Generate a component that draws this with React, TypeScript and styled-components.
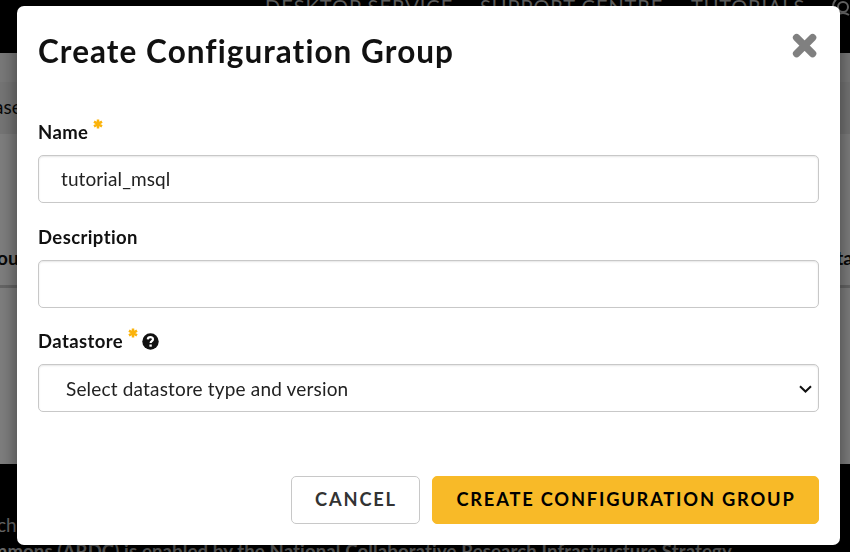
import React from "react";
import styled, { createGlobalStyle } from "styled-components";

const Global = createGlobalStyle`
  * { box-sizing: border-box; }
  body { margin: 0; overflow: hidden; font-family: Lato, "Open Sans", sans-serif; font-size: 19px; color: #111; }
  h1, p { margin: 0; }
`;

const Page = styled.div`
  height: 552px;
  overflow: hidden;
  display: flex;
  flex-direction: column;
  background: #fff;
`;

const Header = styled.header`
  flex: 0 0 53px;
  background: #000;
  color: #c8c8c8;
  font-size: 20px;
  line-height: 13px;
  display: flex;
  padding-left: 265px;
  white-space: nowrap;
`;

const NavItem = styled.span<{ $width: number; $spacing: number }>`
  flex: 0 0 ${(p) => p.$width}px;
  letter-spacing: ${(p) => p.$spacing}px;
`;

const UserIcon = styled.svg`
  flex: none;
  width: 22px;
  height: 20px;
`;

const Band = styled.div<{ $height: number; $color: string }>`
  flex: 0 0 ${(p) => p.$height}px;
  background: ${(p) => p.$color};
  display: flex;
  align-items: center;
  justify-content: space-between;
  white-space: nowrap;
`;

const Crumbs = styled(Band)`
  margin-left: -6px;
  padding-bottom: 3px;
`;

const TableHead = styled(Band)`
  margin: 0 -3px;
  padding-bottom: 3px;
  font-weight: 700;
  border-bottom: 3px solid #ccc;
`;

const Footer = styled.footer`
  flex: 1;
  background: #000;
  color: #ccc;
  padding-top: 48px;
  line-height: 26px;
  white-space: nowrap;
`;

const FooterText = styled.p<{ $bold?: boolean }>`
  font-weight: ${(p) => (p.$bold ? 700 : 400)};
  font-size: ${(p) => (p.$bold ? 18.5 : 19)}px;
  letter-spacing: ${(p) => (p.$bold ? 0.15 : 0)}px;
  margin-left: ${(p) => (p.$bold ? -19 : -3)}px;
`;

const Backdrop = styled.div`
  position: fixed;
  inset: 0;
  background: rgba(0, 0, 0, 0.5);
  padding: 6px 10px 7px 17px;
`;

const Dialog = styled.section`
  height: 539px;
  background: #fff;
  border-radius: 7px;
  box-shadow: 0 5px 20px rgba(0, 0, 0, 0.5);
  padding: 0 21px 21px;
  display: flex;
  flex-direction: column;
`;

const DialogHeader = styled.div`
  height: 106px;
  display: flex;
  justify-content: space-between;
  align-items: flex-start;
`;

const Title = styled.h1`
  padding-top: 25px;
  font-size: 31.5px;
  line-height: 40px;
  font-weight: 700;
  letter-spacing: 1.05px;
  white-space: nowrap;
`;

const Close = styled.button`
  margin: 27px 2px 0 0;
  padding: 0;
  border: 0;
  background: none;
  width: 25px;
  height: 25px;
  display: block;
  svg { display: block; }
`;

const Field = styled.div<{ $height: number }>`
  height: ${(p) => p.$height}px;
`;

const Label = styled.label`
  display: flex;
  height: 43px;
  padding-top: 7px;
  font-weight: 700;
  font-size: 18.5px;
  line-height: 26px;
  letter-spacing: 0.4px;
`;

const Star = styled.svg`
  width: 10px;
  height: 10px;
  margin: 0 0 0 5px;
`;

const Help = styled.svg`
  width: 17px;
  height: 17px;
  margin: 5px 0 0 4px;
`;

const controlStyle = `
  width: 100%;
  height: 48px;
  border: 1px solid #c8c8c8;
  border-radius: 5px;
  box-shadow: inset 0 1px 2px rgba(0, 0, 0, 0.1);
  background: #fff;
  color: #222;
  font-family: inherit;
  font-size: 19px;
  outline: none;
`;

const Input = styled.input`
  ${controlStyle}
  display: block;
  padding: 0 22px 1px;
  letter-spacing: 0.1px;
`;

const SelectWrap = styled.div`
  display: grid;
  align-items: center;
  > * { grid-area: 1 / 1; }
`;

const Select = styled.select`
  ${controlStyle}
  appearance: none;
  padding: 1px 27px 0;
  letter-spacing: 0.17px;
`;

const Chevron = styled.svg`
  justify-self: end;
  margin: 1px 7px 0 0;
  width: 13px;
  height: 8px;
  pointer-events: none;
`;

const Actions = styled.div`
  margin-top: auto;
  display: flex;
  justify-content: flex-end;
  gap: 12px;
`;

const Button = styled.button<{ $primary?: boolean }>`
  width: ${(p) => (p.$primary ? 387 : 129)}px;
  height: 48px;
  padding: 0 0 3px 1px;
  border: 1px solid ${(p) => (p.$primary ? "#f8ba28" : "#c8c8c8")};
  border-radius: 5px;
  background: ${(p) => (p.$primary ? "#f8ba28" : "#fff")};
  color: ${(p) => (p.$primary ? "#000" : "#333")};
  font: 700 18.3px Lato, sans-serif;
  letter-spacing: 1.8px;
  white-space: nowrap;
`;

const Required = () => (
  <Star viewBox="0 0 10 10" stroke="#fbb30b" strokeWidth="2.5">
    <path d="M5 .4v9.2M1 2.7l8 4.6M9 2.7 1 7.3" />
  </Star>
);

export default function App() {
  return (
    <>
      <Global />
      <Page>
        <Header>
          <NavItem $width={215} $spacing={1}>DESKTOP SERVICE</NavItem>
          <NavItem $width={211} $spacing={0.95}>SUPPORT CENTRE</NavItem>
          <NavItem $width={141} $spacing={0.85}>TUTORIALS</NavItem>
          <UserIcon viewBox="0 0 22 20" fill="none" stroke="#c8c8c8" strokeWidth="2">
            <circle cx="11" cy="7" r="5" />
            <path d="M1 6A11 11 0 0 1 11-4M5 15q6-4 12 0" />
          </UserIcon>
        </Header>
        <Band $height={29} $color="#f5f5f5" />
        <Crumbs $height={52} $color="#ececec"><span>ase</span></Crumbs>
        <Band $height={98} $color="#fff" />
        <TableHead $height={56} $color="#fff"><span>ou</span><span>ta</span></TableHead>
        <Band $height={176} $color="#fff" />
        <Footer>
          <FooterText>ch</FooterText>
          <FooterText $bold>ommons (ARDC) is enabled by the National Collaborative Research Infrastructure Strategy</FooterText>
        </Footer>
      </Page>
      <Backdrop>
        <Dialog role="dialog" aria-modal="true">
          <DialogHeader>
            <Title>Create Configuration Group</Title>
            <Close aria-label="Close">
              <svg width="25" height="25" viewBox="0 0 25 25" stroke="#808080" strokeWidth="7.4" strokeLinecap="round">
                <path d="M4.6 4.6l16 16M20.6 4.6l-16 16" />
              </svg>
            </Close>
          </DialogHeader>
          <Field $height={105}>
            <Label>Name<Required /></Label>
            <Input defaultValue="tutorial_msql" />
          </Field>
          <Field $height={104}>
            <Label>Description</Label>
            <Input />
          </Field>
          <Field $height={92}>
            <Label>
              Datastore<Required />
              <Help viewBox="0 0 17 17">
                <circle cx="8.5" cy="8.5" r="8.2" fill="#111" />
                <path d="M5.8 6.4C6 3.4 11 3.4 11 6.3c0 1.9-2.4 1.7-2.4 3.7" fill="none" stroke="#fff" strokeWidth="2.2" />
                <path d="M7.4 11.5h2.4v2.2H7.4z" fill="#fff" />
              </Help>
            </Label>
            <SelectWrap>
              <Select><option>Select datastore type and version</option></Select>
              <Chevron viewBox="0 0 13 8" fill="none" stroke="#111" strokeWidth="2">
                <path d="M1 1.2l5.5 5.3L12 1.2" />
              </Chevron>
            </SelectWrap>
          </Field>
          <Actions>
            <Button>CANCEL</Button>
            <Button $primary>CREATE CONFIGURATION GROUP</Button>
          </Actions>
        </Dialog>
      </Backdrop>
    </>
  );
}
